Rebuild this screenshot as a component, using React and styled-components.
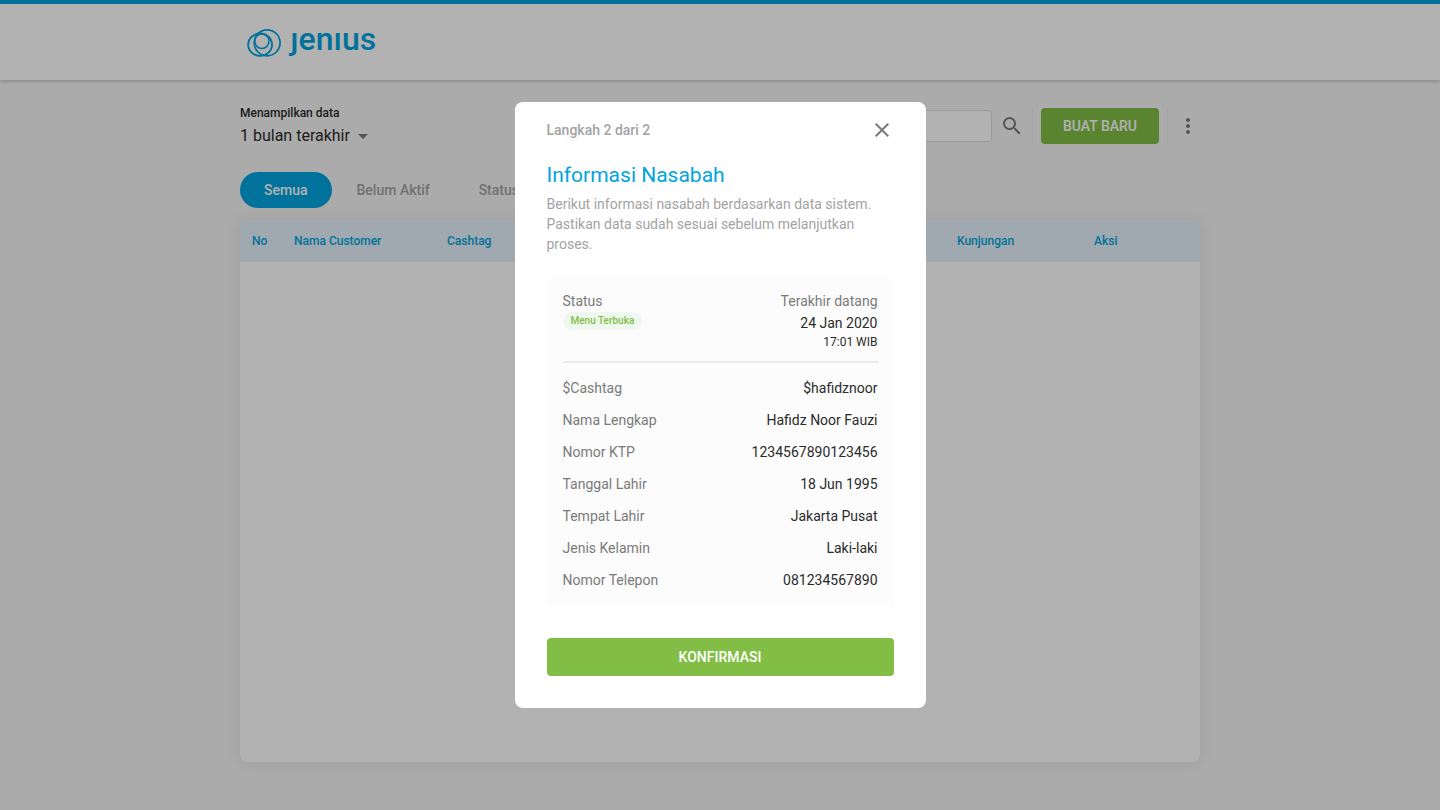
import React, { useState } from 'react';
import styled, { createGlobalStyle, ThemeProvider } from 'styled-components';

const theme = {
  colors: {
    blue: '#00a4de',
    green: '#82be46',
    background: '#f5f5f5',
    tableHead: '#e6f2fb',
    dark: '#2b2b2b',
    gray: '#7a7a7a',
    light: '#a3a3a3',
    line: '#ebebeb',
  },
};

const GlobalStyle = createGlobalStyle`
  *, *::before, *::after {
    box-sizing: border-box;
  }

  body {
    margin: 0;
    background: ${props => props.theme.colors.background};
    color: ${props => props.theme.colors.dark};
    font-family: Roboto, "Liberation Sans", sans-serif;
    font-size: 14px;
  }

  button, input, select {
    font-family: inherit;
  }
`;

// --- PAGE ---

const Page = styled.div`
  display: flex;
  flex-direction: column;
  min-height: 100vh;
`;

const Header = styled.header`
  border-top: 4px solid ${props => props.theme.colors.blue};
  background: white;
  box-shadow: 0 1px 4px rgba(0, 0, 0, 0.25);
`;

const Container = styled.div`
  width: 100%;
  max-width: 960px;
  margin: 0 auto;
`;

const Brand = styled.a`
  display: flex;
  align-items: center;
  gap: 8px;
  height: 76px;
  padding: 2px 0 0 6px;
  color: ${props => props.theme.colors.blue};
  text-decoration: none;
`;

const Wordmark = styled.span`
  padding-bottom: 8px;
  font-size: 32px;
  font-weight: 500;
  line-height: 40px;
`;

const Main = styled(Container).attrs({ as: 'main' })`
  display: flex;
  flex: 1;
  flex-direction: column;
  padding: 24px 0 48px;
`;

const Toolbar = styled.div`
  display: flex;
  align-items: flex-start;
  justify-content: space-between;
  height: 68px;
`;

const Period = styled.div`
  display: flex;
  flex-direction: column;
  align-items: flex-start;
`;

const PeriodLabel = styled.label`
  font-size: 12px;
  font-weight: 500;
  line-height: 18px;
`;

const SelectWrapper = styled.div`
  display: flex;
  align-items: center;
  height: 28px;
  color: ${props => props.theme.colors.gray};
`;

const Select = styled.select`
  appearance: none;
  margin-right: -25px;
  padding: 0 26px 0 0;
  border: none;
  background: transparent;
  color: ${props => props.theme.colors.dark};
  font-size: 16px;
  line-height: 24px;
`;

const Actions = styled.div`
  display: flex;
  align-items: center;
  gap: 8px;
  height: 36px;
  margin-top: 4px;
`;

const SearchInput = styled.input`
  width: 240px;
  height: 32px;
  padding: 0 12px;
  border: 1px solid #dcdcdc;
  border-radius: 4px;
  background: white;
  font-size: 14px;
`;

const IconButton = styled.button`
  display: flex;
  padding: 0;
  border: none;
  background: none;
  color: ${props => props.theme.colors.gray};
  cursor: pointer;
`;

const Separator = styled.span`
  width: 1px;
  height: 36px;
  background: ${props => props.theme.colors.line};
`;

const PrimaryButton = styled.button`
  height: ${props => (props.$block ? '38px' : '36px')};
  width: ${props => (props.$block ? '100%' : 'auto')};
  padding: 0 22px;
  border: none;
  border-radius: 4px;
  background: ${props => props.theme.colors.green};
  color: white;
  font-size: 14px;
  font-weight: 500;
  cursor: pointer;
`;

const Tabs = styled.nav`
  display: flex;
  gap: 1px;
  margin-bottom: 12px;
`;

const Tab = styled.button`
  height: 36px;
  padding: 0 24px;
  border: none;
  border-radius: 18px;
  background: ${props => (props.$active ? props.theme.colors.blue : 'transparent')};
  color: ${props => (props.$active ? 'white' : props.theme.colors.light)};
  font-size: 14px;
  font-weight: 500;
  cursor: pointer;
`;

const TableCard = styled.section`
  flex: 1;
  overflow: hidden;
  border-radius: 8px;
  background: white;
  box-shadow: 0 0 16px rgba(0, 0, 0, 0.08);
`;

const Table = styled.table`
  width: 100%;
  border-collapse: collapse;
  table-layout: fixed;
`;

const HeadCell = styled.th`
  width: ${props => props.$width};
  height: 42px;
  padding: 0 12px;
  background: ${props => props.theme.colors.tableHead};
  color: ${props => props.theme.colors.blue};
  font-size: 12px;
  font-weight: 500;
  text-align: left;
`;

// --- MODAL ---

const Overlay = styled.div`
  position: fixed;
  inset: 0;
  display: flex;
  align-items: center;
  justify-content: center;
  background: rgba(0, 0, 0, 0.3);
`;

const Modal = styled.div`
  width: 411px;
  padding: 16px 32px 32px;
  border-radius: 8px;
  background: white;
`;

const ModalTop = styled.div`
  display: flex;
  align-items: center;
  justify-content: space-between;
  height: 24px;
  margin-bottom: 20px;
`;

const Step = styled.span`
  color: ${props => props.theme.colors.light};
  font-size: 14px;
  font-weight: 500;
`;

const Title = styled.h1`
  margin: 0 0 6px;
  color: ${props => props.theme.colors.blue};
  font-size: 21px;
  font-weight: 400;
  line-height: 26px;
`;

const Description = styled.p`
  margin: 0 0 24px;
  padding-right: 16px;
  color: ${props => props.theme.colors.light};
  font-size: 14px;
  line-height: 20px;
`;

const InfoCard = styled.div`
  margin-bottom: 32px;
  padding: 12px 16px 10px;
  border-radius: 4px;
  background: #fcfcfc;
`;

const Visit = styled.div`
  display: flex;
  justify-content: space-between;
  margin-bottom: 9px;
  padding-bottom: 11px;
  border-bottom: 2px solid ${props => props.theme.colors.line};
`;

const VisitColumn = styled.div`
  display: flex;
  flex-direction: column;
  align-items: ${props => (props.$right ? 'flex-end' : 'flex-start')};
  line-height: 22px;
`;

const Muted = styled.span`
  color: ${props => props.theme.colors.gray};
`;

const Badge = styled.span`
  padding: 0 8px;
  border-radius: 9px;
  background: #eef8ee;
  color: ${props => props.theme.colors.green};
  font-size: 10px;
  font-weight: 500;
  line-height: 18px;
`;

const Time = styled.span`
  font-size: 12px;
  line-height: 16px;
`;

const Details = styled.dl`
  margin: 0;
`;

const DetailRow = styled.div`
  display: flex;
  justify-content: space-between;
  line-height: 32px;

  dt {
    color: ${props => props.theme.colors.gray};
  }

  dd {
    margin: 0;
  }
`;

// --- DATA ---

const tabs = ['Semua', 'Belum Aktif', 'Status'];

const columns = [
  { label: 'No', width: '42px' },
  { label: 'Nama Customer', width: '153px' },
  { label: 'Cashtag', width: 'auto' },
  { label: 'Kunjungan', width: '137px' },
  { label: 'Aksi', width: '118px' },
];

const details = [
  ['$Cashtag', '$hafidznoor'],
  ['Nama Lengkap', 'Hafidz Noor Fauzi'],
  ['Nomor KTP', '1234567890123456'],
  ['Tanggal Lahir', '18 Jun 1995'],
  ['Tempat Lahir', 'Jakarta Pusat'],
  ['Jenis Kelamin', 'Laki-laki'],
  ['Nomor Telepon', '081234567890'],
];

// --- ICONS ---

const Icon = ({ path }) => (
  <svg width="24" height="24" viewBox="0 0 24 24" fill="currentColor" aria-hidden="true">
    <path d={path} />
  </svg>
);

const icons = {
  arrow: 'M7 10l5 5 5-5z',
  search:
    'M15.5 14h-.79l-.28-.27A6.47 6.47 0 0 0 16 9.5 6.5 6.5 0 1 0 9.5 16c1.61 0 3.09-.59 4.23-1.57l.27.28v.79l5 4.99L20.49 19l-4.99-5zm-6 0C7.01 14 5 11.99 5 9.5S7.01 5 9.5 5 14 7.01 14 9.5 11.99 14 9.5 14z',
  more: 'M12 8c1.1 0 2-.9 2-2s-.9-2-2-2-2 .9-2 2 .9 2 2 2zm0 2c-1.1 0-2 .9-2 2s.9 2 2 2 2-.9 2-2-.9-2-2-2zm0 6c-1.1 0-2 .9-2 2s.9 2 2 2 2-.9 2-2-.9-2-2-2z',
  close:
    'M19 6.41L17.59 5 12 10.59 6.41 5 5 6.41 10.59 12 5 17.59 6.41 19 12 13.41 17.59 19 19 17.59 13.41 12z',
};

const LogoMark = () => (
  <svg width="36" height="30" viewBox="0 0 36 30" fill="none" stroke="currentColor" aria-hidden="true">
    <ellipse cx="21.1" cy="14.8" rx="13" ry="13" strokeWidth="1.7" />
    <ellipse cx="14.1" cy="16.7" rx="11.9" ry="11.2" strokeWidth="1.9" />
    <ellipse cx="15.9" cy="13.2" rx="7.1" ry="7.3" strokeWidth="1.6" />
  </svg>
);

// --- APP ---

function App() {
  const [activeTab, setActiveTab] = useState('Semua');
  const [open, setOpen] = useState(true);

  return (
    <ThemeProvider theme={theme}>
      <GlobalStyle />
      <Page>
        <Header>
          <Container>
            <Brand href="#" aria-label="Jenius">
              <LogoMark />
              <Wordmark>ȷenıus</Wordmark>
            </Brand>
          </Container>
        </Header>

        <Main>
          <Toolbar>
            <Period>
              <PeriodLabel htmlFor="period">Menampilkan data</PeriodLabel>
              <SelectWrapper>
                <Select id="period">
                  <option>1 bulan terakhir</option>
                </Select>
                <Icon path={icons.arrow} />
              </SelectWrapper>
            </Period>
            <Actions>
              <SearchInput type="search" aria-label="Cari" />
              <IconButton type="button" aria-label="Cari data">
                <Icon path={icons.search} />
              </IconButton>
              <Separator />
              <PrimaryButton type="button" onClick={() => setOpen(true)}>BUAT BARU</PrimaryButton>
              <Separator />
              <IconButton type="button" aria-label="Menu lainnya">
                <Icon path={icons.more} />
              </IconButton>
            </Actions>
          </Toolbar>

          <Tabs>
            {tabs.map((tab) => (
              <Tab key={tab} type="button" $active={tab === activeTab} onClick={() => setActiveTab(tab)}>
                {tab}
              </Tab>
            ))}
          </Tabs>

          <TableCard>
            <Table>
              <thead>
                <tr>
                  {columns.map((column) => (
                    <HeadCell key={column.label} $width={column.width}>{column.label}</HeadCell>
                  ))}
                </tr>
              </thead>
            </Table>
          </TableCard>
        </Main>
      </Page>

      {open && (
        <Overlay>
          <Modal role="dialog" aria-modal="true" aria-labelledby="modal-title">
            <ModalTop>
              <Step>Langkah 2 dari 2</Step>
              <IconButton type="button" aria-label="Tutup" onClick={() => setOpen(false)}>
                <Icon path={icons.close} />
              </IconButton>
            </ModalTop>
            <Title id="modal-title">Informasi Nasabah</Title>
            <Description>
              Berikut informasi nasabah berdasarkan data sistem. Pastikan data sudah sesuai sebelum melanjutkan proses.
            </Description>

            <InfoCard>
              <Visit>
                <VisitColumn>
                  <Muted>Status</Muted>
                  <Badge>Menu Terbuka</Badge>
                </VisitColumn>
                <VisitColumn $right>
                  <Muted>Terakhir datang</Muted>
                  <span>24 Jan 2020</span>
                  <Time>17:01 WIB</Time>
                </VisitColumn>
              </Visit>
              <Details>
                {details.map(([label, value]) => (
                  <DetailRow key={label}>
                    <dt>{label}</dt>
                    <dd>{value}</dd>
                  </DetailRow>
                ))}
              </Details>
            </InfoCard>

            <PrimaryButton type="button" $block onClick={() => setOpen(false)}>KONFIRMASI</PrimaryButton>
          </Modal>
        </Overlay>
      )}
    </ThemeProvider>
  );
}
export default App;
